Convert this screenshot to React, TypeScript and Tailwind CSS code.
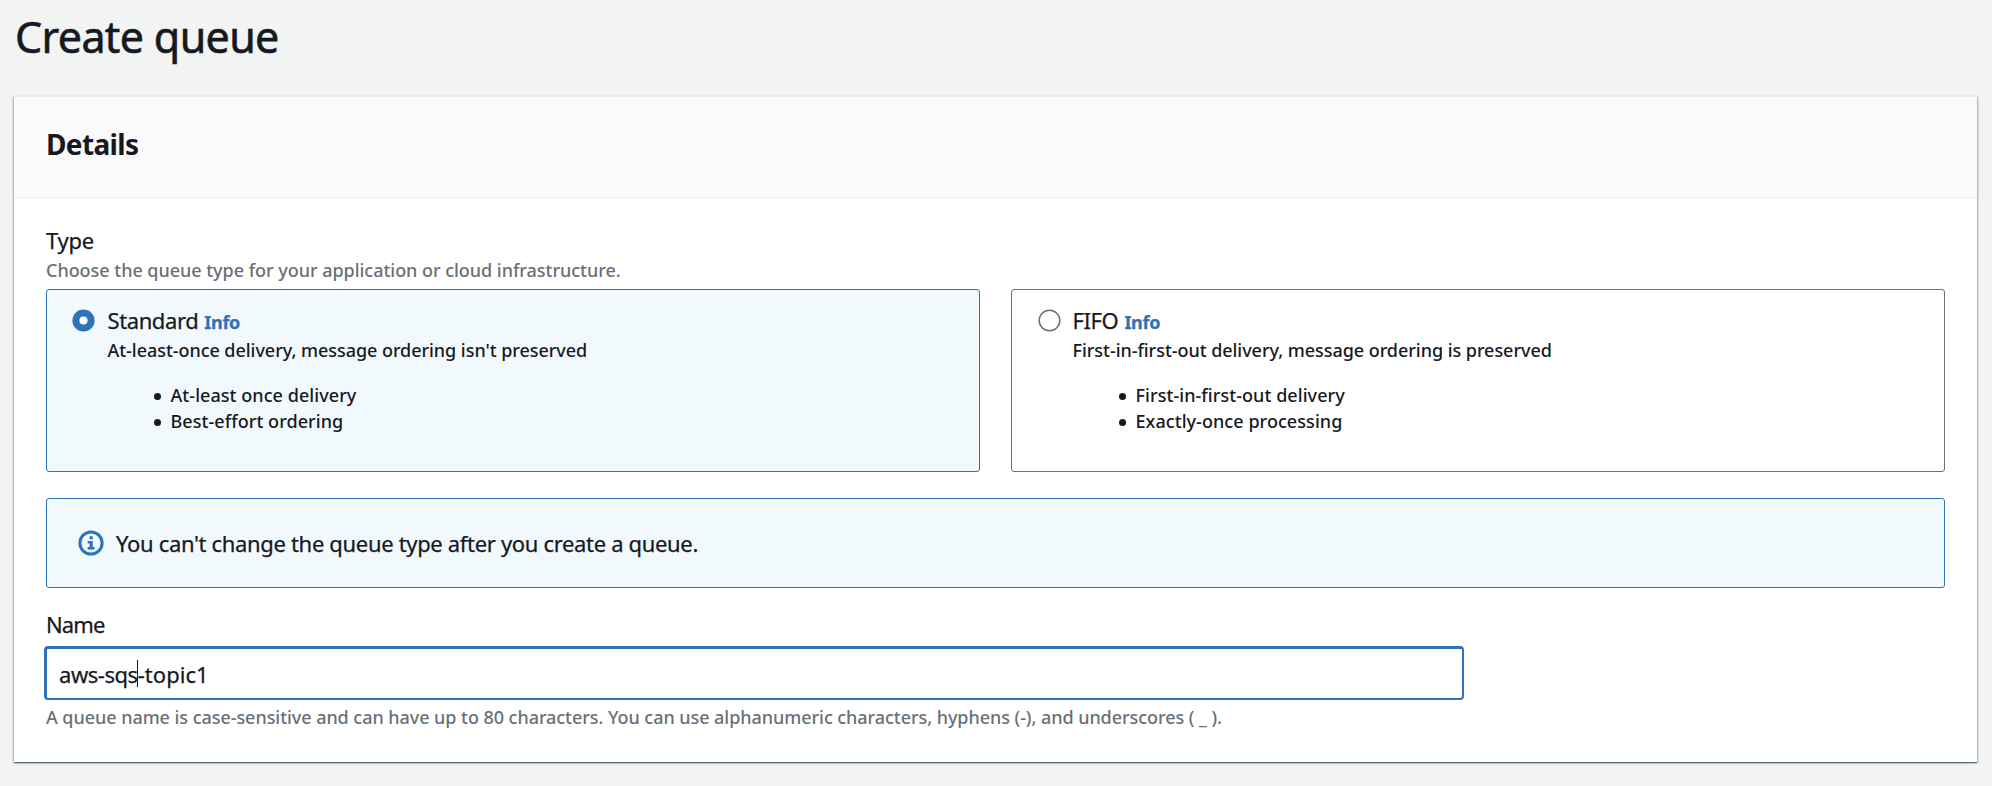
type QueueOption = {
  name: string;
  summary: string;
  points: string[];
  selected: boolean;
};

const options: QueueOption[] = [
  {
    name: "Standard",
    summary: "At-least-once delivery, message ordering isn't preserved",
    points: ["At-least once delivery", "Best-effort ordering"],
    selected: true,
  },
  {
    name: "FIFO",
    summary: "First-in-first-out delivery, message ordering is preserved",
    points: ["First-in-first-out delivery", "Exactly-once processing"],
    selected: false,
  },
];

function Radio({ checked }: { checked: boolean }) {
  return (
    <svg className="mt-[19px] size-[23px] shrink-0" viewBox="0 0 23 23" fill="none">
      {checked ? (
        <circle cx="11.5" cy="11.5" r="7.6" stroke="#2e73b8" strokeWidth="7" fill="#fff" />
      ) : (
        <circle cx="11.5" cy="11.5" r="10.3" stroke="#687078" strokeWidth="1.5" fill="#fff" />
      )}
    </svg>
  );
}

function InfoIcon() {
  return (
    <svg className="size-[26px] shrink-0" viewBox="0 0 26 26" fill="none">
      <circle cx="13" cy="13" r="11.1" stroke="#2e73b8" strokeWidth="3" />
      <path fill="#2e73b8" d="M11.6 6.2h3.2v3h-3.2zM9.6 11h5.2v6h1.8v2.4h-7V17h2v-3.4h-2z" />
    </svg>
  );
}

function OptionCard({ option }: { option: QueueOption }) {
  return (
    <div
      className={
        option.selected
          ? "flex h-[183px] gap-[13px] rounded-[3px] border border-[#2e73b8] bg-[#f2f9fd] pl-[24.5px]"
          : "flex h-[183px] gap-[12px] rounded-[3px] border border-[#687078] bg-white pl-[25.5px]"
      }
    >
      <Radio checked={option.selected} />
      <div className="pt-4">
        <div className="flex items-baseline gap-[6px] text-[22px] leading-7 tracking-[-0.4px] [-webkit-text-stroke:0.25px_currentColor]">
          <span>{option.name}</span>
          <a className="text-[18px] font-bold tracking-[-0.3px] text-[#2e73b8]">Info</a>
        </div>
        <p className="mt-[3px] text-[18px] font-medium leading-[22px] tracking-[-0.045px]">{option.summary}</p>
        <ul className="mt-[21px] pl-[46px] text-[18px] font-medium leading-[26px] tracking-[0.06px]">
          {option.points.map((point) => (
            <li key={point} className="flex items-center gap-[10px]">
              <span className="mt-[2px] size-[7px] rounded-full bg-[#16191f]" />
              {point}
            </li>
          ))}
        </ul>
      </div>
    </div>
  );
}

export default function App() {
  return (
    <main className="h-[786px] overflow-hidden bg-[#f2f3f3] pl-[14px] pr-[15px] pt-[15px] font-['Noto_Sans',sans-serif] text-[#16191f]">
      <h1 className="pl-px text-[43px] leading-[44px] tracking-[-0.65px] [-webkit-text-stroke:0.6px_currentColor]">
        Create queue
      </h1>

      <section className="mt-[37px] h-[666px] border-t border-[#eaeded] bg-white shadow-[0_1px_1px_0_rgba(0,28,36,0.45),1px_1px_2px_0_rgba(0,28,36,0.25),-1px_1px_2px_0_rgba(0,28,36,0.25)]">
        <header className="flex h-[101px] items-start border-b border-[#eaeded] bg-[#fafafa] px-8 pt-[29px]">
          <h2 className="text-[28px] font-bold leading-9 tracking-[-0.65px]">Details</h2>
        </header>

        <div className="px-8 pt-7">
          <h3 className="text-[22px] leading-7 tracking-[-0.25px] [-webkit-text-stroke:0.25px_currentColor]">Type</h3>
          <p className="mt-[5px] text-[18px] font-medium leading-[22px] tracking-[-0.03px] text-[#687078]">
            Choose the queue type for your application or cloud infrastructure.
          </p>
          <div className="mt-2 grid grid-cols-2 gap-[31px]">
            {options.map((option) => (
              <OptionCard key={option.name} option={option} />
            ))}
          </div>

          <div className="mt-[26px] flex h-[90px] items-center gap-3 rounded-[3px] border border-[#2e73b8] bg-[#f2f9fd] pl-[31px]">
            <InfoIcon />
            <p className="text-[22px] leading-7 tracking-[-0.33px] [-webkit-text-stroke:0.25px_currentColor]">
              You can't change the queue type after you create a queue.
            </p>
          </div>

          <h3 className="mt-[22px] text-[22px] leading-7 tracking-[-0.9px] [-webkit-text-stroke:0.25px_currentColor]">
            Name
          </h3>
          <div className="-ml-0.5 mt-2 flex h-[54px] w-[1420px] items-center rounded-[4px] border-2 border-t-[3px] border-l-[3px] border-[#2e73b8] bg-white pl-[12px] text-[22px] leading-7 [-webkit-text-stroke:0.25px_currentColor]">
            <span className="tracking-[-0.45px]">aws-sqs</span>
            <span className="-ml-px h-[27px] w-px bg-[#16191f]" />
            <span className="tracking-[0.05px]">-topic1</span>
          </div>
          <p className="mt-1.5 text-[18px] font-medium leading-[22px] tracking-[-0.05px] text-[#687078]">
            A queue name is case-sensitive and can have up to 80 characters. You can use alphanumeric characters, hyphens
            (-), and underscores ( _ ).
          </p>
        </div>
      </section>
    </main>
  );
}
